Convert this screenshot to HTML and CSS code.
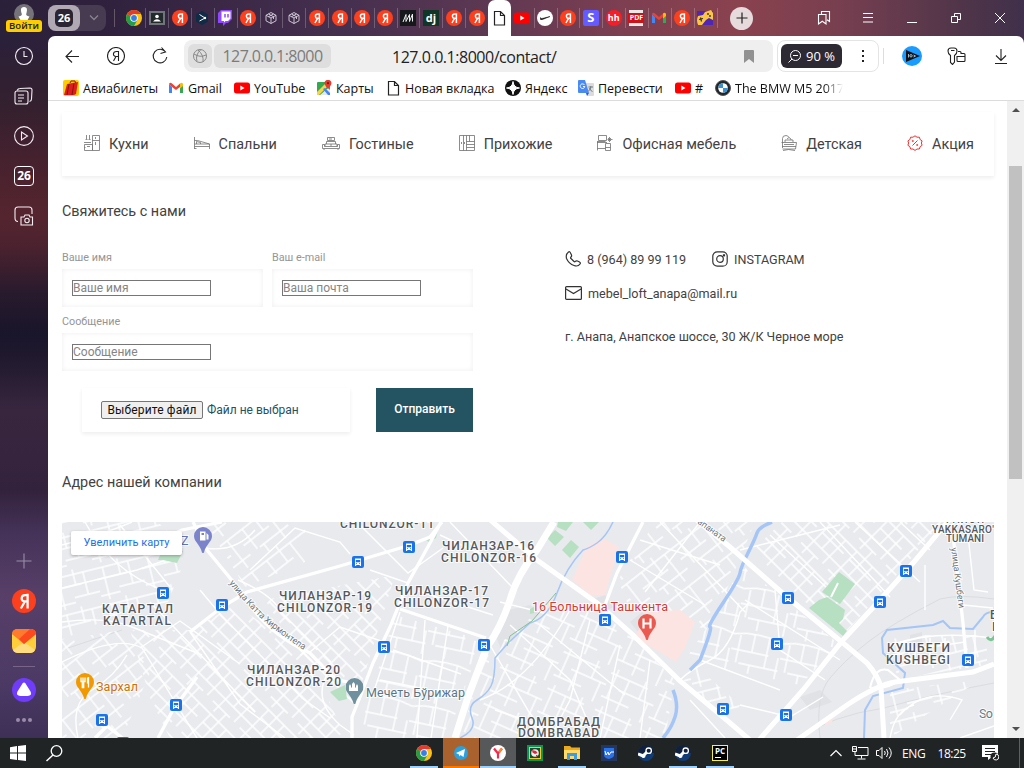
FILE: index.html
```html
<!DOCTYPE html>
<html lang="ru">
<head>
<meta charset="utf-8">
<title>Контакты</title>
<link rel="stylesheet" href="styles.css">
</head>
<body>
<svg class="defs" width="0" height="0">
  <defs>
    <symbol id="ya" viewBox="0 0 16 16"><circle cx="8" cy="8" r="8" fill="#fc3f1d"/><path d="M10.400 3.200V13M10.400 4H8.700C5.800 4 5.600 8.300 8.600 8.300H10.400M8.600 8.300L5.900 13" fill="none" stroke="#fff" stroke-width="1.500"/></symbol>
    <symbol id="chrome" viewBox="0 0 16 16"><circle cx="8" cy="8" r="8" fill="#fbc116"/><path d="M8 8L1.100 4A8 8 0 0 1 14.900 4H8Z" fill="#e33b2e"/><path d="M1.100 4A8 8 0 0 0 8 16L11.400 10 8 8Z" fill="#249c48"/><circle cx="8" cy="8" r="3.800" fill="#fff"/><circle cx="8" cy="8" r="2.900" fill="#3a7de8"/></symbol>
    <symbol id="cube" viewBox="0 0 16 16"><path d="M8 2.500l5 2.800v5.500L8 13.500l-5-2.700V5.300zM3 5.300L8 8l5-2.700M8 8v5.500M5.500 4l5 2.700V9M10.500 4l-5 2.700" fill="none" stroke="#d9d2de" stroke-width=".9"/></symbol>
    <symbol id="yt" viewBox="0 0 16 16"><rect y="2.500" width="16" height="11" rx="2.500" fill="#f00"/><path d="M6.300 5.500v5l4.200-2.500z" fill="#fff"/></symbol>
    <symbol id="gmail" viewBox="0 0 16 16"><path d="M1 4v9h3V7z" fill="#4285f4"/><path d="M15 4v9h-3V7z" fill="#34a853"/><path d="M1 4l3 3 4 3 4-3V3.500L8 7 4 3.500Q2 2 1 4" fill="#ea4335"/><path d="M12 3.500Q14 2 15 4v2l-3 2.500z" fill="#fbbc04"/></symbol>
    <symbol id="page" viewBox="0 0 16 16"><path d="M3.500 1.500h6l4 4v9.500h-10zM9.500 1.500v4h4" fill="none" stroke="#222" stroke-width="1.200"/></symbol>
    <symbol id="steam" viewBox="0 0 16 16"><circle cx="8" cy="8" r="8" fill="#123c75"/><path d="M0 8a8 8 0 0 1 16 0" fill="#10203e"/><path d="M0 9l5 2 4-4" stroke="#fff" stroke-width="3" fill="none"/><circle cx="10.700" cy="5.700" r="2.700" fill="#10203e" stroke="#fff" stroke-width="1.300"/><circle cx="5.500" cy="11" r="2" fill="#fff"/></symbol>
    <g id="bus"><rect width="12" height="12" rx="2" fill="#1a73e8"/><path d="M3 2.500h6v6.500H3z" fill="#fff"/><path d="M3.800 4h4.400v2.300H3.800zM4 7.300h1v.8H4zM7 7.300h1v.8H7z" fill="#1a73e8"/><path d="M3 9h1.200v1H3zM7.800 9H9v1H7.800z" fill="#fff"/></g>
    <symbol id="pin" viewBox="0 0 18 26"><path d="M9 0a9 9 0 0 1 9 9c0 6-6 8-8 16.500q-1 1-2 0C6 17 0 15 0 9a9 9 0 0 1 9-9"/></symbol>
  </defs>
</svg>

<div class="desktop">
  <header class="tabbar">
    <div class="login">
      <svg width="20" height="20" viewBox="0 0 20 20"><circle cx="10" cy="10" r="10" fill="#76727a"/><path d="M10 3c4 0 3 4 2.500 6-1 2 0 3 3 3.500l-2 3.500h-7l-2-3.500c3-.5 4-1.500 3-3.500C7 7 6 3 10 3" fill="#fff"/></svg>
      <span class="login-label">Войти</span>
    </div>
    <div class="group"><span class="group-main"><span class="group-count">26</span></span>
      <svg class="group-arrow" width="10" height="6" viewBox="0 0 10 6"><path d="M1 .5l4 4 4-4" fill="none" stroke="#8a8390" stroke-width="1.300"/></svg></div>
    <span class="bar-divider"></span>
    <div class="tabs">
      <span class="tab"><svg><use href="#chrome"/></svg></span>
      <span class="tab"><svg viewBox="0 0 16 16"><path d="M0 1h16v14H0z" fill="#70757a"/><path d="M2 3h12v10H2z" fill="#222a2c"/><circle cx="8" cy="6.500" r="1.800" fill="#fff"/><path d="M4 11.500q4-4.500 8 0" fill="#fff"/></svg></span>
      <span class="tab"><svg><use href="#ya"/></svg></span>
      <span class="tab"><svg viewBox="0 0 16 16"><path d="M8 1l6 3.500v7L8 15l-6-3.500v-7z" fill="#0f2b46"/><path d="M5.500 4.500L11 8l-5.500 3" stroke="#fff" fill="none"/><circle cx="11" cy="8" r="1.200" fill="#fff"/></svg></span>
      <span class="tab"><svg viewBox="0 0 16 16"><path d="M1 3l3-3h11v9l-4 4H9l-3 3v-3H1z" fill="#9146ff"/><path d="M4.500 1.500h9v7L11 11H8.500L7 12.500V11H4.500z" fill="#fff"/><path d="M8 4v3.500M11 4v3.500" stroke="#9146ff" stroke-width="1.500"/></svg></span>
      <span class="tab"><svg><use href="#ya"/></svg></span>
      <span class="tab"><svg><use href="#cube"/></svg></span>
      <span class="tab"><svg><use href="#cube"/></svg></span>
      <span class="tab"><svg><use href="#ya"/></svg></span>
      <span class="tab"><svg><use href="#ya"/></svg></span>
      <span class="tab"><svg><use href="#ya"/></svg></span>
      <span class="tab"><svg><use href="#ya"/></svg></span>
      <span class="tab"><svg viewBox="0 0 16 16"><path d="M0 0h16v16H0z" fill="#16181c"/><path d="M3 12L6 4.500v7L9.500 4.500v7L12.500 4v7.500" fill="none" stroke="#eee"/></svg></span>
      <span class="tab"><span class="tile dj">dj</span></span>
      <span class="tab"><svg><use href="#ya"/></svg></span>
      <span class="tab"><svg><use href="#ya"/></svg></span>
      <span class="tab active"><svg><use href="#page"/></svg></span>
      <span class="tab"><svg><use href="#yt"/></svg></span>
      <span class="tab"><svg viewBox="0 0 16 16"><circle cx="8" cy="8" r="8" fill="#fff"/><path d="M3.500 7.500q-1 3 2 2L13 6.500 6 8.300q-3 .8-2.500-.8" fill="#111" stroke="#111" stroke-width=".5"/></svg></span>
      <span class="tab"><svg><use href="#ya"/></svg></span>
      <span class="tab"><span class="tile stripe">S</span></span>
      <span class="tab"><span class="tile hh">hh</span></span>
      <span class="tab"><span class="pdf"><span class="pdf-label">PDF</span></span></span>
      <span class="tab"><svg><use href="#gmail"/></svg></span>
      <span class="tab"><svg><use href="#ya"/></svg></span>
      <span class="tab"><svg viewBox="0 0 16 16"><path d="M0 1h16v14H0z" fill="#5026b5"/><path d="M1 6l5-1 2-3 6-2 2 3v7l-4-2-3 2-4 5H1q-2-5 0-9" fill="#fdc543"/><path d="M2 9.500l4-1M3.500 7.500l1 4" stroke="#333" stroke-width="1.200"/><circle cx="11" cy="4" r=".9" fill="#333"/><circle cx="13" cy="6" r=".9" fill="#333"/></svg></span>
    </div>
    <span class="tabs-end"></span>
    <span class="new-tab"><svg width="12" height="12" viewBox="0 0 12 12"><path d="M6 .5v11M.5 6h11" stroke="#222" stroke-width="1.200"/></svg></span>
    <div class="window-buttons">
      <svg width="16" height="16" viewBox="0 0 16 16"><path d="M5.500 4V1.500h8v10L11 9.800M2.500 4.500h7.500v9.500L6.300 11.300 2.500 14z" fill="none" stroke="#fff" stroke-width="1.100" /></svg>
      <svg width="10" height="10" viewBox="0 0 10 10"><path d="M0 .5h10M0 4.500h10M0 9h10" stroke="#fff"/></svg>
      <svg width="10" height="10" viewBox="0 0 10 10"><path d="M0 9.500h10" stroke="#fff"/></svg>
      <svg width="10" height="10" viewBox="0 0 10 10"><path d="M.5 3.500h6v6h-6zM3.500 3V.5h6v6H7" fill="none" stroke="#fff"/></svg>
      <svg width="10" height="10" viewBox="0 0 10 10"><path d="M0 0l10 10M10 0L0 10" stroke="#fff"/></svg>
    </div>
  </header>

  <div class="middle">
    <aside class="sidebar">
      <svg width="20" height="20" viewBox="0 0 20 20"><circle cx="10" cy="10" r="8.500"/><path d="M10 5v5.500h3.500"/></svg>
      <svg width="20" height="20" viewBox="0 0 20 20"><rect x="1" y="5" width="13" height="13" rx="2"/><path d="M3 4.500Q4 2.500 6 2.500l10-.5q2 0 2 2l-.5 9q0 2-2 2.500M4 9h6M4 12h6M4 15h4" /></svg>
      <svg width="20" height="20" viewBox="0 0 20 20"><circle cx="10" cy="10" r="9.400"/><path d="M7.500 6v8l6-4z"/></svg>
      <span class="side-count">26</span>
      <svg width="20" height="20" viewBox="0 0 20 20"><path d="M4 15.500Q1 15.500 1 12V4q0-3 3-3h11q3 0 3 3v4"/><path d="M7 11h3l1-2h4l1 2h2.500v8H7z"/><circle cx="13" cy="14.500" r="2.200"/></svg>
      <span class="side-space"></span>
      <svg class="dim" width="16" height="16" viewBox="0 0 16 16"><path d="M8 .5v15M.5 8h15"/></svg>
      <svg class="app" width="24" height="24"><use href="#ya"/></svg>
      <svg class="app" width="24" height="24" viewBox="0 0 24 24"><rect width="24" height="24" rx="6" fill="#ffcc3a"/><path d="M1 21L12 13l11 8q-1.500 3-5 3H6q-3.500 0-5-3" fill="#ffdc80"/><path d="M0 5Q0 0 6 0h12q6 0 6 5L12 15z" fill="#ff7a2c"/><path d="M7 10l11-10q6 0 6 5L12 15z" fill="#fc4a1f"/></svg>
      <span class="side-line"></span>
      <svg class="app" width="24" height="24" viewBox="0 0 24 24"><circle cx="12" cy="12" r="12" fill="#6f3cfa"/><path d="M10.500 5.500q1.500-2 3 0l5 8q2 4-3 4.500h-7q-5-.5-3-4.500z" fill="#fff"/></svg>
      <svg class="dots" width="16" height="4" viewBox="0 0 16 4"><circle cx="2" cy="2" r="2"/><circle cx="8" cy="2" r="2"/><circle cx="14" cy="2" r="2"/></svg>
    </aside>

    <div class="browser">
      <div class="toolbar">
        <svg class="back" width="14" height="14" viewBox="0 0 14 14"><path d="M14 7.500H1M7 1.500L1 7.500l6 6"/></svg>
        <svg class="home" width="18" height="18" viewBox="0 0 18 18"><circle cx="9" cy="9" r="8.500"/><path d="M11.500 4v10M11.500 4.500H9.500C5.500 4.500 5.500 9.500 9 9.500h2.500M9 9.500L6.500 14"/></svg>
        <svg class="reload" width="16" height="18" viewBox="0 0 16 18"><path d="M13.500 5A6.800 6.800 0 1 0 14.800 10M9.500 .5L13.500 5 8.500 6.500" /></svg>
        <div class="omnibox">
          <span class="globe"><svg width="14" height="14" viewBox="0 0 14 14"><circle cx="7" cy="7" r="6.500"/><path d="M1 5q6 4 12 1M8 .5q-6 5-4 12M5 1q6 5 5 12"/></svg></span>
          <span class="host">127.0.0.1:8000</span>
          <span class="url">127.0.0.1:8000/contact/</span>
          <svg class="mark" width="10" height="13" viewBox="0 0 10 13"><path d="M0 1q0-1 1-1h8q1 0 1 1v12L5 9 0 13z" fill="#919191"/></svg>
        </div>
        <div class="zoombox">
          <span class="zoom"><svg width="13" height="13" viewBox="0 0 13 13"><circle cx="7.500" cy="5.500" r="5"/><path d="M4 9L.5 12.500M5 5.500h5"/></svg>90 %</span>
          <svg class="more" width="2" height="12" viewBox="0 0 2 12"><path d="M0 0h2v2H0zM0 5h2v2H0zM0 10h2v2H0z" fill="#222"/></svg>
        </div>
        <span class="tool-line"></span>
        <svg class="flag" width="20" height="20" viewBox="0 0 20 20"><circle cx="10" cy="10" r="10" fill="#1a9bff"/><path d="M4 4l14 6-14 6z" fill="#111"/><path d="M6.500 8v3.500M11.500 9l2 1-2 1" stroke="#bde3ff" stroke-width=".8" fill="none"/><circle cx="9" cy="9.800" r="1.200" fill="none" stroke="#bde3ff" stroke-width=".8"/></svg>
        <svg class="keys" width="19" height="18" viewBox="0 0 19 18"><path d="M3.500 8.500Q1 7 1 4q0-3 3-3h3q3 0 3 3 0 3-2.500 4.500v6.500L5.500 17.500l-2-2zM4 3.500h3.500M11 4.500h2q1 0 1 1v1h3q1 0 1 1v6q0 1-1 1h-6q-1 0-1-1V9.500h8"/></svg>
        <svg class="download" width="12" height="16" viewBox="0 0 12 16"><path d="M6 1v11M1 7.500l5 5 5-5M0 15.500h12"/></svg>
      </div>

      <div class="bookmarks">
        <span class="bm w1"><svg viewBox="0 0 16 16"><rect width="16" height="16" rx="2" fill="#fc0"/><path d="M4 4l11-2-2 12-2 1H1z" fill="#dc1e1e"/><path d="M7 3L8 1h4l.5 2M6 4L4 15M11 3L9 15" stroke="#8f1010" fill="none"/></svg>Авиабилеты</span>
        <span class="bm w2"><svg><use href="#gmail"/></svg>Gmail</span>
        <span class="bm w3"><svg><use href="#yt"/></svg>YouTube</span>
        <span class="bm w4"><svg viewBox="0 0 16 16"><rect x="1" y="2" width="13" height="13" rx="1" fill="#34a853"/><path d="M4 15l8-7 2 2v4l-1 1z" fill="#e8e8e8"/><path d="M1 12L11 2h3v2L3 15H1z" fill="#fbd34a"/><path d="M7 9l5 6h2v-2L9 8z" fill="#4285f4"/><path d="M12 0a3 3 0 0 1 3.500 3q0 2-3.500 6Q8.500 5 8.500 3A3 3 0 0 1 12 0" fill="#e33e32"/><circle cx="12" cy="3.200" r="1.100" fill="#7d1712"/></svg>Карты</span>
        <span class="bm w5"><svg><use href="#page"/></svg>Новая вкладка</span>
        <span class="bm w6"><svg viewBox="0 0 16 16"><circle cx="8" cy="8" r="8" fill="#111"/><path d="M8 1.500q.5 6 6.500 6.500-6 .5-6.500 6.500Q7.500 8.500 1.500 8 7.500 7.500 8 1.500" fill="#fff" stroke="#fff"/></svg>Яндекс</span>
        <span class="bm w7"><svg viewBox="0 0 16 16"><path d="M6 3h9q1 0 1 1v11q0 1-1 1H9z" fill="#dcdcdc"/><path d="M1 0h6l4 13H1q-1 0-1-1V1q0-1 1-1" fill="#4a8af4"/><path d="M8 13h3l-2 3z" fill="#2a5bd0"/><path d="M6.500 5A2.300 2.300 0 1 0 6.800 6.500H5" fill="none" stroke="#fff"/><path d="M10.500 7h4.500M12.800 6v1q-.3 3-2.500 4M11.500 8q1 3 3 3.500" fill="none" stroke="#6f7c89"/></svg>Перевести</span>
        <span class="bm w8"><svg><use href="#yt"/></svg>#</span>
        <span class="bm w9"><svg viewBox="0 0 16 16"><circle cx="8" cy="8" r="7.500" fill="#20262c" stroke="#555"/><circle cx="8" cy="8" r="4.800" fill="#fff"/><path d="M8 8V3.200A4.800 4.800 0 0 0 3.200 8zM8 8v4.800A4.800 4.800 0 0 0 12.800 8z" fill="#3d8fce"/></svg>The BMW M5 2017</span>
      </div>

      <div class="viewport">
        <main class="page">
          <nav class="menu">
            <a class="item"><svg width="16" height="16" viewBox="0 0 16 16"><path d="M8.500.5h7v15h-7zM8.500 5.500h7M11.500 2v2M11.500 7v3M.5 9.500h8v6h-8zM.5 12.500h1M3 11.500h3M0 7.500h7M2.500 0v4M5.500 0v4M1.500 4.500h2M4.500 4.500h2"/></svg>Кухни</a>
            <a class="item"><svg width="16" height="16" viewBox="0 0 16 16"><path d="M.5 2v12M.5 5.500h3l12 3.500v5M.5 11.500h15M.5 9h15M2.500 9V6.500l4 1V9M.5 13.500h2"/></svg>Спальни</a>
            <a class="item wide"><svg width="18" height="16" viewBox="0 0 18 16"><path d="M5.500 2.500h7v3h-7zM4.500 9V6.500h9V9M3 11.500V9h12v2.500M.5 13.500v-4h2v2h13v-2h2v4zM2 14v1M16 14v1M7 4h3M9 9v2"/></svg>Гостиные</a>
            <a class="item"><svg width="16" height="16" viewBox="0 0 16 16"><path d="M.5.5h15v15H.5zM4.500.5v15M7.500.5v15M7.500 6.500h8M7.500 9.500h8M7.500 12.500h8M2.500 7v2M5.500 7v2M10.500 .5v6"/></svg>Прихожие</a>
            <a class="item"><svg width="16" height="16" viewBox="0 0 16 16"><path d="M1.500.5h8v5h-8zM.5 6v9.500M0 7.500h10M.5 13.500h8M.5 6.500h8M8.500 8.500h5v7h-5zM8.500 12.500h5M12.500 2v5M10.500 4.500h5M11 3l3 3M14 3l-3 3"/></svg>Офисная мебель</a>
            <a class="item"><svg width="16" height="16" viewBox="0 0 16 16"><path d="M1.500 13V3.500Q1.500.5 5 .5q2 0 3 2M.5 7.500h15M1.500 14h13l1-6.500M1 11.500h14M3 9.500h10M2 15.500q5-2 12 0M6 4l2-1.500 2 1.500V5M4 7V5h8v2"/></svg>Детская</a>
            <a class="item sale"><svg width="16" height="16" viewBox="0 0 16 16"><path d="M8 .8l2 1.400 2.400 0 .7 2.300 2 1.400L14.400 8l.7 2.300-2 1.400-.7 2.300H10L8 15.400 6 14H3.600l-.7-2.300-2-1.400L1.600 8 .9 5.900l2-1.400.7-2.300H6zM5.500 10.500l5-5"/><circle cx="5.800" cy="6" r=".6"/><circle cx="10.200" cy="10" r=".6"/></svg>Акция</a>
          </nav>

          <h2 class="title first">Свяжитесь с нами</h2>
          <section class="contact">
            <form class="form">
              <div class="pair">
                <label class="field">Ваше имя<span class="box"><input placeholder="Ваше имя"></span></label>
                <label class="field">Ваш e-mail<span class="box"><input placeholder="Ваша почта"></span></label>
              </div>
              <label class="field message">Сообщение<span class="box"><input placeholder="Сообщение"></span></label>
              <div class="actions">
                <span class="file"><span class="choose">Выберите файл</span>Файл не выбран</span>
                <button class="send" type="button">Отправить</button>
              </div>
            </form>
            <div class="info">
              <div class="line"><span class="entry phone"><svg width="16" height="16" viewBox="0 0 16 16"><path d="M3.500 1q1-1 2 1l1 2q.4 1-.5 2t0 1.500l3 3q.6.600 1.500-.2t2-.3l2 1q1.500 1 .5 2-2 3-6 1.500Q4 13 1.500 7.500.500 3.500 3.500 1"/></svg>8 (964) 89 99 119</span>
              <span class="entry insta"><svg width="16" height="16" viewBox="0 0 16 16"><rect x=".8" y=".8" width="14.400" height="14.400" rx="4.500"/><circle cx="8" cy="8" r="3.300"/><path d="M11.500 3.800h1v1h-1z"/></svg>INSTAGRAM</span></div>
              <div class="line"><span class="entry mail"><svg width="17" height="14" viewBox="0 0 17 14"><rect x=".6" y=".6" width="15.800" height="12.800" rx="1"/><path d="M1 3l7.500 4.500L16 3"/></svg>mebel_loft_anapa@mail.ru</span></div>
              <div class="line address">г. Анапа, Анапское шоссе, 30 Ж/К Черное море</div>
            </div>
          </section>

          <h2 class="title second">Адрес нашей компании</h2>
          <div class="map">
            <svg class="map-art" viewBox="62 522 932 216" width="932" height="216">
              <defs>
                <pattern id="g1" width="46" height="38" patternUnits="userSpaceOnUse" patternTransform="rotate(-14)"><path d="M0 5h46M0 16h30M20 28h26M8 5v33M24 0v16M34 5v23M0 33h20" /></pattern>
                <pattern id="g2" width="38" height="44" patternUnits="userSpaceOnUse" patternTransform="rotate(45)"><path d="M0 4h38M8 15h30M0 27h38M0 37h24M8 4v40M19 0v27M30 4v33M19 37v7" /></pattern>
                <pattern id="g3" width="52" height="40" patternUnits="userSpaceOnUse" patternTransform="rotate(24)"><path d="M0 6h40M14 19h38M0 31h30M6 0v31M20 6v34M36 0v19M46 19v21" /></pattern>
                <pattern id="g4" width="48" height="40" patternUnits="userSpaceOnUse" patternTransform="rotate(-38)"><path d="M0 6h48M0 20h32M12 31h36M9 6v25M25 0v20M38 6v34M17 31v9" /></pattern>
                <pattern id="g5" width="50" height="46" patternUnits="userSpaceOnUse" patternTransform="rotate(12)"><path d="M0 7Q24 0 50 7M0 22h38M10 35h40M7 7v28M21 4v18M36 4v31M48 22v24M21 35v11" /></pattern>
              </defs>
              <path d="M62 522h932v216H62z" fill="#e8eaed"/>
              <g fill="#e0e2e6"><path d="M508 610l22-5 10 8-38 38-5-12zM800 697l20-7 12 12-22 8zM590 600l15-5 8 12-12 7zM630 622l12-10 6 8-10 12zM910 635l12-3v14h-12z"/></g>
              <path d="M820 738q-5-42 10-60t38-36 72-43q20-5 54 0M800 738q30-22 84-30 50-14 110-25M62 650l60-20" fill="none" stroke="#dadce0"/>
              <g class="grids">
                <path d="M62 522h96l30 30-20 50-45 10-61 28z" fill="url(#g1)"/>
                <path d="M62 640l60-10 30 38-30 70H62z" fill="url(#g4)"/>
                <path d="M130 630l60 0 45-25 75 50 35 83H170l-20-40z" fill="url(#g2)"/>
                <path d="M205 522h100v40l-60 25z" fill="url(#g4)"/>
                <path d="M265 600l130-25-40 130-55-50z" fill="url(#g2)"/>
                <path d="M395 615l87 25-35 98h-90z" fill="url(#g5)"/>
                <path d="M480 660l60-50 60-5 75 75-10 58H462z" fill="url(#g3)"/>
                <path d="M655 522h100l-45 108-80-20-12-30z" fill="url(#g4)"/>
                <path d="M782 522h160l-30 35-70 80-90-86z" fill="url(#g2)"/>
                <path d="M742 565l98 80-40 40-115-25 30-45z" fill="url(#g5)"/>
                <path d="M695 665l45 40-8 18-50-40z" fill="url(#g1)"/>
                <path d="M892 635h95v30l-90 14zM890 690l90-10-90 58z" fill="url(#g1)"/>
              </g>
              <g class="minor">
                <path d="M62 545q40-10 70-23M62 588l75-18 35-12M85 522q25 48 77 68M120 525l50 62M62 622q45-6 70 5l70 28M62 662q55-28 80-14l55 90M78 738q-8-35 14-48t35-35M190 632l50 72 45 34M150 602l105 110M140 648l40-27 60 43M200 590l20 24 82 84 28 20M238 580q35 15 42 31l51 51M205 548q30 5 50-18M250 570l45-42 45 14 10 12M310 652l30-25 44 15M330 670q-20 28 10 55l14 10"/>
                <path d="M360 525l48 48 35-25M440 535l60 28M450 522l62 65M415 590l78 25M370 570l38 13M400 612l-28 85M425 620l-8 118M448 626l-17 112M393 650l68 24M380 680l85 17M500 602l40 10M487 640l42 72 20 26M510 625l60 55 25 58M480 700q50-18 90-90M540 625l85 70M495 710l85 28M590 620l-20 80-20 38M620 645l-20 93M650 660l-10 78"/>
                <path d="M640 540l80 25M630 560l75 45M660 522l85 90M700 522l-55 70M680 680q10-10 30-20t30-48l10-10M700 660l80 30M690 700l35 38M745 600l95 60M775 590l5 60 45 30M740 550l100-25M770 535l70 65M820 522l70 75M855 522l65 60M900 522l30 28M740 705l50 12 33-20M925 565v45M963 605l30 3M968 535l6 55 14 2M892 645q40-15 100-7M910 650l55-8M915 665v-22M930 662v-24M945 660v-22M975 630v32M900 715q25-28 62-15l-12 20M890 738q5-28 24-33M960 738l34-12"/>
              </g>
              <g fill="#b7dfc2"><path d="M158 560l5-12 20 3-6 12-14-3zM558 522h15l-7 9-9-4zM547 538l8-8 9 7-9 9zM583 522h16l-8 8zM562 550l9-10 8 7-9 11zM426 540l12-10-2 8-7 4zM330 692l15-7 2 14-8 2zM822 592l17-20 16 12-15 20zM809 608l10-8 8-3 18 13-2 9-4 4 8 8-4 5zM530 609l4-2v6l-4 1z"/></g>
              <path d="M831 597l7-14" stroke="#fff" stroke-width="2"/>
              <g fill="#fce4e2"><path d="M587 546l16-8 16 9-14 48-14 1-19-16zM650 612l30-2 15 12-10 26-9 14-42-25zM825 720l8-3-1 5-7 4z"/></g>
              <g class="water"><path d="M613 522q-7 15-16 21t-14 7q-17 18-26 43t-27 30l-22 20-13 15q0 20-4 28t-14 14-5 18-12 20"/><path d="M772 522q-13 5-15 11t-9 20-8 20-17 30-13 24-10 33l-10 10M673 690q6 15 2 27t-12 21" stroke-width="3.500"/><path d="M994 612q-9 0-11 5l-10 12-23-1-7-7-10 4-46 5-5 8 1 15 22 20-2 15-30 8-8 14-1 28" stroke-width="2"/></g>
              <path d="M556 593l-24 28-22 15-3 10" fill="none" stroke="#83c28f"/>
              <g class="major">
                <path d="M193 522l14 28 23 28 17 22q20 33 63 53l25 26 25 6M140 550l42-20 40-8" />
                <path d="M190 632l32-25 25-15 93-26 67-20 23-9 12-15M441 522l-11 21-22 40-18 44-17 36-13 34-8 20v21M400 609l86 29"/>
                <path d="M643 522l-26 51-12 32M953 535l10 88 4 45"/>
                <path d="M158 738l15-28 24-33M95 738l12-12 18 14" />
              </g>
              <g class="highway">
                <path d="M554 522l-17 28q-20 25-27 50-9 27-23 47l-19 50-13 41" stroke-width="7"/>
                <path d="M488 518l49 42 60 43 36 32 47 46 43 36 27 23M693 517l37 30 57 50 56 46 24 20q12 14 14 25l3 50"/>
                <path d="M949 520l-36 43-33 37-37 40-40 50-44 50M797 740l50-35q30-20 48-23l78-10 21-8"/>
                <path d="M870 688q5-22 18-18l12 10q-13 10-30 8" stroke-width="2"/>
              </g>
              <g class="buses">
                <use href="#bus" x="352" y="556"/><use href="#bus" x="403" y="541"/><use href="#bus" x="157" y="587"/><use href="#bus" x="216" y="599"/><use href="#bus" x="378" y="641"/><use href="#bus" x="478" y="639"/><use href="#bus" x="96" y="714"/><use href="#bus" x="170" y="699"/><use href="#bus" x="616" y="551"/><use href="#bus" x="599" y="614"/><use href="#bus" x="782" y="592"/><use href="#bus" x="874" y="596"/><use href="#bus" x="900" y="565"/><use href="#bus" x="771" y="638"/><use href="#bus" x="717" y="703"/><use href="#bus" x="780" y="709"/><use href="#bus" x="962" y="654"/><use href="#bus" x="117" y="737"/>
              </g>
              <use href="#pin" x="194" y="527" width="18" height="26" fill="#7b84cb"/><path d="M200 531.500h5.500v9H200zM206.500 533l2 2v4.500h-2" fill="#fff"/><path d="M201.500 533h2.500v2h-2.500z" fill="#7b84cb"/>
              <use href="#pin" x="76" y="673" width="18" height="26" fill="#f29900"/><path d="M81 677.500v4h1.300v6h1.400v-6H85v-4M83 677.500v4M88.500 677v10.500M87.500 677.500v6" stroke="#fff" fill="none" stroke-width="1.300"/>
              <use href="#pin" x="345.500" y="678" width="18" height="26" fill="#71909e"/><path d="M349 691v-5l1-2 1 2v2l1-1v-3l1.500-2 1.500 2v3l1 1v-2l1-2 1 2v5z" fill="#fff"/>
              <use href="#pin" x="638" y="614" width="18" height="26" fill="#ea5a50"/><path d="M643.500 618.500v10M650.500 618.500v10M643.500 623.500h7" stroke="#fff" stroke-width="2.200"/>
              <path id="katta" d="M229 583Q252 612 270 626T308 653" fill="none"/>
              <path id="kushbegi" d="M951 548l8 62" fill="none"/>
              <path id="apanata" d="M697 523l28 20" fill="none"/>
              <g class="street"><text><textPath href="#katta" textLength="101">улица Катта Хирмонтепа</textPath></text><text><textPath href="#kushbegi" textLength="61">улица Кушбеги</textPath></text><text><textPath href="#apanata" textLength="33">апаната</textPath></text></g>
              <g class="district">
                <text x="340" y="528" textLength="94">CHILONZOR-11</text>
                <text x="442" y="550" textLength="92">ЧИЛАНЗАР-16</text><text x="441" y="562" textLength="95">CHILONZOR-16</text>
                <text x="395" y="595" textLength="93">ЧИЛАНЗАР-17</text><text x="394" y="607" textLength="95">CHILONZOR-17</text>
                <text x="279" y="599.500" textLength="92">ЧИЛАНЗАР-19</text><text x="277" y="611.500" textLength="95">CHILONZOR-19</text>
                <text x="247" y="674" textLength="93">ЧИЛАНЗАР-20</text><text x="246" y="686" textLength="95">CHILONZOR-20</text>
                <text x="102" y="613" textLength="71">КАТАРТАЛ</text><text x="103" y="625" textLength="68">KATARTAL</text>
                <text x="517" y="725.500" textLength="83">ДОМБРАБАД</text><text x="518" y="737" textLength="81">DOMBRABAD</text>
                <text x="887" y="652" textLength="63">КУШБЕГИ</text><text x="886" y="664" textLength="64">KUSHBEGI</text>
                <text class="small" x="946" y="523" textLength="38">РАЙОН</text><text class="small" x="932" y="533" textLength="62">YAKKASARO'</text><text class="small" x="946" y="542" textLength="38">TUMANI</text>
                <text x="990" y="619">Б</text><text x="992" y="631">I</text>
              </g>
              <g class="poi"><text x="181" y="545" fill="#6672bd" textLength="11">Z</text><text x="96" y="691" fill="#d0700c" textLength="42">Зархал</text><text x="366" y="697" fill="#5d7583" textLength="99">Мечеть Бўрижар</text><text x="532" y="611" fill="#d93a36" textLength="136">16 Больница Ташкента</text><text x="979" y="718" fill="#607d8b" textLength="14">So</text></g>
              <path d="M987 637q4 6 8-1" stroke="#7dc492" stroke-width="3" fill="none"/>
            </svg>
            <a class="enlarge">Увеличить карту</a>
          </div>
        </main>
        <div class="scroll"><i class="up"></i><span class="thumb"></span><i class="down"></i></div>
      </div>
    </div>
  </div>

  <footer class="taskbar">
    <svg class="start" width="16" height="16" viewBox="0 0 16 16"><path d="M0 2.200L7 1v6.500H0zM8 .9L16 0v7.500H8zM0 8.500h7V15L0 14zM8 8.500h8V16l-8-1z" fill="#fff"/></svg>
    <svg class="search" width="17" height="17" viewBox="0 0 17 17"><circle cx="10.500" cy="6" r="5.300" fill="none" stroke="#fff" stroke-width="1.300"/><path d="M7 10L.5 16" stroke="#fff" stroke-width="1.500"/></svg>
    <div class="apps">
      <span class="task open"><svg><use href="#chrome"/></svg></span>
      <span class="task alert"><svg viewBox="0 0 16 16"><circle cx="8" cy="8" r="7" fill="#2aa1dc"/><path d="M3 8l9-4-1.500 8-3-2-1 1.500L6 9.500z" fill="#fff"/></svg></span>
      <span class="task current"><svg viewBox="0 0 16 16"><circle cx="8" cy="8" r="8" fill="#fff"/><path d="M4 3.500L8 8.500V13.500M8 8.500L12 3.500" fill="none" stroke="#f22b4e" stroke-width="2.200"/><path d="M9 7.300l3-3.800" stroke="#ff8b15" stroke-width="2.200"/></svg></span>
      <span class="task"><svg viewBox="0 0 16 16"><path d="M0 0h16v16H0z" fill="#0d9650"/><path d="M2 2h12v12H2z" fill="#efce2e"/><path d="M3 3h10v10H3z" fill="#164f33"/><circle cx="8" cy="8" r="3.800" fill="#eee"/><path d="M5 5l4 1 1.500 2L8 9 5.500 7.500M9 10l2 0-2 2z" fill="#d72b39"/></svg></span>
      <span class="task open"><svg viewBox="0 0 16 16"><path d="M0 1h6l1.500 1.500H16V14H0z" fill="#eba920"/><path d="M0 5h16v9H0z" fill="#ffda68"/><path d="M3 15V8h10v7h-3v-4H6v4z" fill="#3c9de0"/></svg></span>
      <span class="task"><svg viewBox="0 0 16 16"><path d="M0 0h16v16H0z" fill="#24355f"/><path d="M3 3h10v8q-1 2-5 3-5-1-5-4z" fill="#2972e8"/><path d="M4 6l1 4 2-3 1 3 2-3h3" stroke="#fff" fill="none"/></svg></span>
      <span class="task"><svg><use href="#steam"/></svg></span>
      <span class="task open"><svg><use href="#steam"/></svg></span>
      <span class="task open"><span class="pc">PC</span></span>
    </div>
    <svg class="chevron" width="12" height="8" viewBox="0 0 12 8"><path d="M.5 7L6 1.500 11.500 7" fill="none" stroke="#fff" stroke-width="1.200"/></svg>
    <svg class="net" width="17" height="14" viewBox="0 0 17 14"><path d="M6 1.500h10v8H3V6M9.500 9.500v3M5.500 13h8M.5.500h4v5h-4zM1 3h3" fill="none" stroke="#fff"/></svg>
    <svg class="volume" width="17" height="14" viewBox="0 0 17 14"><path d="M.5 4.500h2.500l3-3v11l-3-3H.5zM8.500 5q1.500 2 0 4M10.500 3q3 4 0 8M13 1.500q4.500 5.500 0 11" fill="none" stroke="#fff"/></svg>
    <span class="lang">ENG</span>
    <span class="clock">18:25</span>
    <svg class="notes" width="17" height="16" viewBox="0 0 17 16"><path d="M0 0h16v12h-6l-4 3v-3H0z" fill="#fff"/><path d="M3 3.500h10M3 6.500h10M3 9.500h6" stroke="#222"/><circle cx="12.500" cy="11.500" r="4" fill="#222"/><path d="M14 9a3 3 0 1 1-3 4q3 0 3-4" fill="none" stroke="#fff"/></svg>
    <span class="peek"></span>
  </footer>
</div>
</body>
</html>
```

FILE: styles.css
```css
* { box-sizing: border-box; }
body { margin: 0; width: 1024px; height: 768px; overflow: hidden; font-family: "Open Sans", "Noto Sans", sans-serif; }
svg { display: block; flex: none; }
.defs { position: absolute; }
.desktop {
  display: grid; grid-template-rows: 36px 702px 30px; width: 1024px; height: 768px;
  background:
    linear-gradient(90deg, #2b2039 0, #2f213d 100px, #46304f 350px, #5d3852 490px, #7d3f51 620px, #8a424e 740px, #773f50 840px, #503549 960px, #40304b 1024px) 0 0 / 1024px 50px no-repeat,
    linear-gradient(180deg, #2b2039 36px, #34202f 105px, #46212e 160px, #55252f 215px, #4c222f 245px, #271a2d 295px, #19152a 335px, #251c31 370px, #38263f 410px, #36243e 460px, #33223c 490px, #46335a 535px, #573f68 595px, #4c3a65 680px, #3d3056 738px);
}

.tabbar { display: flex; height: 36px; align-items: center; }
.login { width: 48px; height: 36px; padding-top: 4px; display: flex; flex-direction: column; align-items: center; }
.login-label { margin-top: -4px; width: 36px; height: 12px; border-radius: 3px; background: #fc0; color: #222; font: 600 9.5px/12px "Open Sans", sans-serif; text-align: center; z-index: 1; }
.group { display: flex; align-items: center; width: 58px; height: 26px; border-radius: 8px; background: #463b50; }
.group-main { display: flex; width: 32px; height: 26px; border-radius: 8px; background: #b0a9b4; align-items: center; justify-content: center; }
.group-count { width: 18px; height: 18px; border-radius: 5px; background: #2a2433; color: #fff; font: 700 11px/18px "Open Sans", sans-serif; text-align: center; }
.group-arrow { margin-left: 9px; }
.bar-divider { width: 1px; height: 18px; margin: 0 8px 0 7.5px; background: #635768; }
.tabs { display: flex; width: 594px; height: 36px; }
.tab { flex: 1; display: flex; align-items: center; justify-content: center; min-width: 0; background: linear-gradient(#ffffff38, #ffffff38) 0 50% / 1px 20px no-repeat; }
.tab:first-child, .tab.active, .tab.active + .tab { background: none; }
.tab svg { width: 16px; height: 16px; }
.tab.active { background: #fff; border-radius: 7px 7px 0 0; }
.tile { width: 16px; height: 16px; color: #fff; font: 700 11px/15px "Open Sans", sans-serif; text-align: center; }
.dj { background: #113527; }
.stripe { background: #635bff; border-radius: 2px; font-size: 13px; }
.hh { background: #f51d28; border-radius: 50%; font-size: 9px; }
.pdf { display: flex; width: 14px; height: 16px; align-items: center; justify-content: center; background: #e9e9e9; }
.pdf-label { flex: none; width: 16px; height: 10px; background: #cf1118; color: #fff; font: 700 7px/10px "Open Sans", sans-serif; text-align: center; }
.tabs-end { width: 1px; height: 20px; background: #ffffff38; }
.new-tab { display: flex; width: 23px; height: 23px; margin: 0 0 0 12.5px; border-radius: 50%; background: #e6dadd; align-items: center; justify-content: center; }
.window-buttons { display: flex; align-items: center; margin-left: 63px; gap: 34px; }
.window-buttons svg:first-child { margin-right: -3px; }

.middle { display: grid; grid-template-columns: 48px 976px; height: 702px; }
.sidebar { display: flex; flex-direction: column; align-items: center; padding: 10px 0 16px; gap: 20px; }
.sidebar svg { fill: none; stroke: #f3edf2; stroke-width: 1.1; }
.sidebar .app { stroke: none; margin-bottom: -4px; }
.side-count { width: 20px; height: 20px; border: 1px solid #fff; border-radius: 4px; color: #fff; font: 700 12px/18px "Open Sans", sans-serif; text-align: center; }
.side-space { flex: 1; }
.sidebar .dim { stroke: #9b8da5; }
.side-line { width: 22px; height: 1px; background: #796587; margin: -3px 0 -9px; }
.sidebar .dots { fill: #9c8ba8; stroke: none; }

.browser { display: grid; grid-template-rows: 40px 24px 1px 637px; background: #fff; border-radius: 7px 7px 0 0; overflow: hidden; }
.toolbar { display: flex; align-items: center; padding: 0 17px 0 17px; }
.back, .home, .reload, .keys, .download { fill: none; stroke: #222; stroke-width: 1.1; }
.home { margin-left: 28px; }
.reload { margin-left: 27px; }
.omnibox { display: flex; align-items: center; width: 589px; height: 32px; margin-left: 16px; padding-left: 4px; border-radius: 8px; background: #efefef; font-size: 16px; }
.globe { display: flex; width: 24px; height: 24px; border-radius: 6px; background: #dedede; align-items: center; justify-content: center; }
.globe svg { fill: none; stroke: #888; }
.host { width: 117px; height: 24px; margin-left: 2px; border-radius: 6px; background: #dedede; color: #7b7b7b; line-height: 25px; text-align: center; letter-spacing: -0.6px; }
.url { width: 352px; margin-left: 61px; padding-top: 1px; color: #222; letter-spacing: -0.47px; }
.zoombox { display: flex; align-items: center; width: 102px; height: 32px; margin-left: 4px; padding-left: 3px; border: 1px solid #e4e4e4; border-radius: 8px; }
.zoom { display: flex; width: 61px; height: 24px; border-radius: 6px; background: #2d2a33; color: #fff; align-items: center; justify-content: center; gap: 5px; font-size: 13px; font-weight: 500; }
.zoom svg { fill: none; stroke: #fff; }
.more { margin-left: 20px; }
.tool-line { width: 1px; height: 16px; margin-left: 4px; background: #ddd; }
.flag { margin-left: 18px; }
.keys { margin-left: 25px; }
.download { margin-left: 29px; }

.bookmarks { display: flex; align-items: center; padding-left: 15px; font-size: 12.5px; color: #111; white-space: nowrap; }
.bm { display: flex; align-items: center; gap: 4px; overflow: hidden; height: 24px; flex: none; }
.bm svg { width: 16px; height: 16px; }
.w1 { width: 105px; } .w2 { width: 66px; } .w3 { width: 82px; } .w4 { width: 69px; } .w5 { width: 120px; } .w6 { width: 73px; } .w7 { width: 97px; } .w8 { width: 40px; }
.w9 { width: 128px; mask-image: linear-gradient(90deg, #000 85%, transparent); -webkit-mask-image: linear-gradient(90deg, #000 85%, transparent); }
.viewport { grid-row: 4; display: grid; grid-template-columns: 959px 17px; height: 637px; box-shadow: 0 -1px #dcdcdc; overflow: hidden; }

.page { padding: 0 13px 0 14px; font-family: Roboto, sans-serif; color: #424242; }
.menu { display: flex; justify-content: space-between; align-items: center; width: 932px; height: 64px; margin-top: 11px; padding: 0 20px 0 22px; box-shadow: 0 2px 4px #00000012; font-size: 14.4px; }
.item { display: flex; align-items: center; gap: 9px; }
.item svg { fill: none; stroke: #707070; stroke-width: .8; margin-top: -2px; }
.item.sale svg { stroke: #e33; stroke-width: 1; }
.title { margin: 0; font-size: 14.4px; line-height: 18px; font-weight: 400; }
.first { margin-top: 27px; }
.contact { display: flex; height: 182px; margin-top: 30px; }
.form { width: 411px; color: #959595; font-size: 10.8px; }
.pair { display: flex; gap: 9px; }
.field { display: block; flex: 1; line-height: 14px; }
.box { display: flex; height: 38px; margin-top: 4px; padding: 11px 10px; box-shadow: inset 0 0 5px #00000012; align-items: start; }
.box input { width: 139px; height: 16px; margin: 0; padding: 0; border: 1px solid #767676; border-radius: 0; font: 12px Roboto, sans-serif; }
.box input::placeholder { color: #858585; }
.message { margin-top: 8px; }
.actions { display: flex; justify-content: space-between; margin: 17px 0 0 20px; }
.file { display: flex; align-items: center; width: 268px; height: 44px; padding-left: 19px; box-shadow: 0 2px 4px #00000012; color: #245361; font-size: 12px; gap: 4px; }
.choose { width: 102px; height: 18px; border: 1px solid #767676; border-radius: 2px; background: #efefef; color: #111; line-height: 16px; text-align: center; letter-spacing: .15px; }
.send { width: 97px; height: 44px; border: 0; padding: 0 0 2px; background: #245361; color: #fff; font: 500 12px Roboto, sans-serif; }
.info { margin-left: 92px; font-size: 12.6px; }
.info svg { fill: none; stroke: #333; stroke-width: 1.2; }
.line { display: flex; height: 18px; margin-bottom: 16px; align-items: center; }
.line:first-child { margin-top: -1px; }
.entry { display: flex; align-items: center; gap: 6px; }
.phone { width: 147px; }
.address { margin-top: 25px; }
.second { margin-top: 41px; }
.map { position: relative; height: 216px; margin-top: 30px; }
.map-art { overflow: hidden; }
.enlarge { position: absolute; left: 9px; top: 9px; width: 111px; height: 24px; border-radius: 2px; background: #fff; box-shadow: 0 1px 3px #00000048; color: #1a73e8; font-size: 11px; line-height: 23px; text-align: center; }
.map pattern path, .minor { fill: none; stroke: #fff; stroke-width: 1.4; }
.water { fill: none; stroke: #a5c5f7; stroke-width: 1.5; }
.major { fill: none; stroke: #fff; stroke-width: 3.3; }
.highway { fill: none; stroke: #fff; stroke-width: 5; }
.map text { paint-order: stroke; stroke: #ffffffd0; stroke-width: 2px; }
.district { font: 500 12px Roboto, sans-serif; fill: #55585d; }
.district .small { font-size: 10px; }
.street { font: 9px Roboto, sans-serif; fill: #6d7175; }
.poi { font: 12.5px Roboto, sans-serif; }

.scroll { display: flex; flex-direction: column; align-items: center; background: #f0f0f0; }
.up { margin-top: 7px; border: 4px solid transparent; border-top: 0; border-bottom-color: #505050; }
.thumb { width: 13px; height: 313px; margin-top: 54px; background: #c1c1c1; }
.down { margin-top: auto; margin-bottom: 7px; border: 4px solid transparent; border-bottom: 0; border-top-color: #505050; }

.taskbar { display: flex; align-items: center; background: #212425; color: #fff; font-size: 12px; }
.start { margin-left: 10px; }
.search { margin-left: 20px; }
.apps { display: flex; margin-left: 343px; gap: 1px; }
.task { display: flex; width: 36px; height: 30px; align-items: center; justify-content: center; }
.task svg { width: 16px; height: 16px; }
.open { background: linear-gradient(#9cd0fa, #9cd0fa) 50% 100% / 28px 2px no-repeat; }
.alert { background: #a9622e; border-bottom: 2px solid #f97900; padding-top: 2px; }
.current { background: #565859; border-bottom: 2px solid #9cd0fa; padding-top: 2px; }
.pc { width: 16px; height: 16px; border: 1px solid #f5f04c; background: linear-gradient(#fff, #fff) 2px 11px / 6px 1px no-repeat #000; font: 700 8px/9px "Open Sans", sans-serif; text-align: center; }
.chevron { margin-left: 92px; }
.net { margin-left: 10px; }
.volume { margin-left: 7px; }
.lang { margin-left: 9px; letter-spacing: -.3px; }
.clock { margin-left: 12px; letter-spacing: -.5px; }
.notes { margin-left: auto; }
.peek { width: 1px; height: 30px; margin: 0 4px 0 20px; background: #5e6061; }
```
